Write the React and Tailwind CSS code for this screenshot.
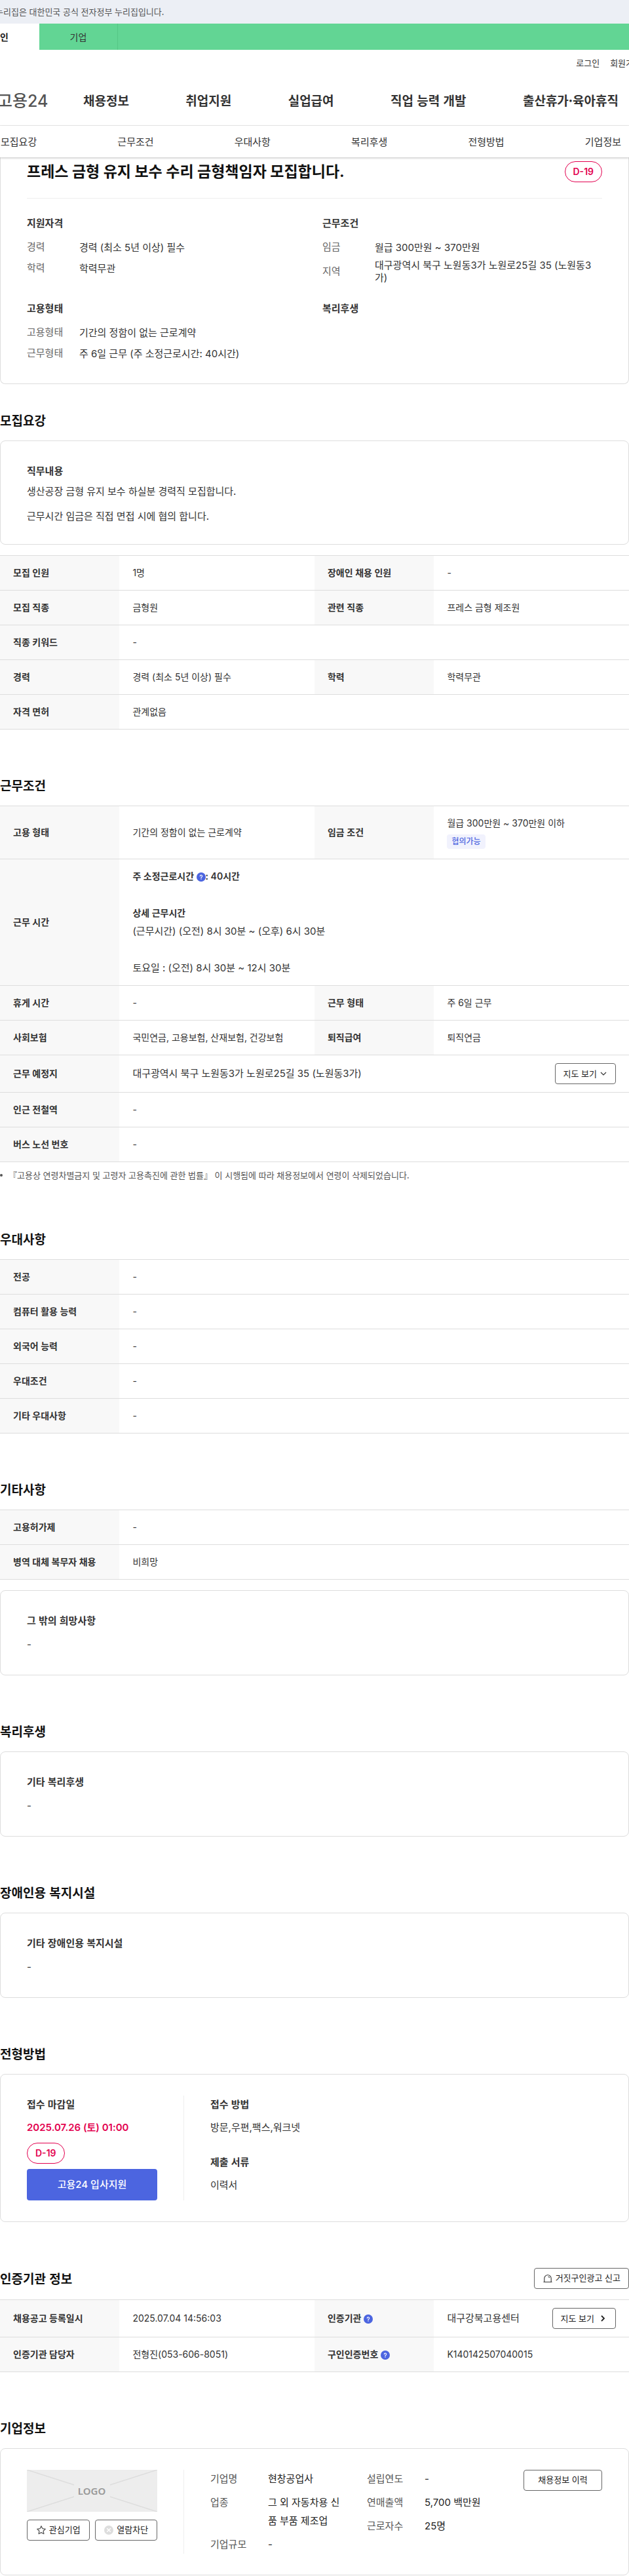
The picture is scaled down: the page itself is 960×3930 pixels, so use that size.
import React from 'react';

const headerMenus = ['채용정보', '취업지원', '실업급여', '직업 능력 개발', '출산휴가·육아휴직'];
const sectionTabs = ['모집요강', '근무조건', '우대사항', '복리후생', '전형방법', '기업정보'];

function DDay() {
  return (
    <span className="inline-flex h-8 items-center rounded-full border border-[#e3004f] px-[12px] text-sm font-semibold text-[#e3004f]">
      D-19
    </span>
  );
}

function HelpButton() {
  return (
    <button type="button" aria-label="도움말" className="inline-block align-middle cursor-pointer">
      <svg className="w-[14px] h-[14px] block" viewBox="0 0 14 14" fill="none">
        <circle cx="7" cy="7" r="7" fill="#4c65e0" />
        <path d="M5.4 5.7a1.6 1.6 0 1 1 2.5 1.3c-.6.4-.9.6-.9 1.2" stroke="#fff" strokeWidth="1.2" strokeLinecap="round" />
        <circle cx="7" cy="10.1" r="0.75" fill="#fff" />
      </svg>
    </button>
  );
}

function OutlineButton({ children, className = 'px-3' }) {
  return (
    <button
      type="button"
      className={`inline-flex h-8 shrink-0 items-center justify-center gap-1 whitespace-nowrap rounded border border-[#666] bg-white text-[13px] text-[#222] cursor-pointer ${className}`}
    >
      {children}
    </button>
  );
}

function Section({ title, action, first, children }) {
  return (
    <section className={first ? 'mt-10' : 'mt-[70px]'}>
      <div className="mb-4 flex items-center justify-between">
        <h2 className="font-['Noto_Sans_CJK_KR',Inter,sans-serif] text-[19px] leading-[30px] font-bold text-[#111]">{title}</h2>
        {action}
      </div>
      {children}
    </section>
  );
}

function Card({ children }) {
  return <div className="rounded-lg border border-[#ddd] px-10 py-8">{children}</div>;
}

function CardTitle({ children }) {
  return (
    <h3 className="font-['Noto_Sans_CJK_KR',Inter,sans-serif] text-[15px] leading-[26px] font-bold text-[#333]">{children}</h3>
  );
}

// each row is a list of [label, value] pairs; a single pair spans the whole row
function InfoTable({ caption, rows }) {
  return (
    <table className="w-full table-fixed border-collapse border-t border-[#ddd] text-sm">
      <caption className="sr-only">{caption}</caption>
      <colgroup>
        <col className="w-[19%]" />
        <col className="w-[31%]" />
        <col className="w-[19%]" />
        <col className="w-[31%]" />
      </colgroup>
      <tbody>
        {rows.map((row, i) => (
          <tr key={i} className="border-b border-[#ddd]">
            {row.map(([label, value], j) => (
              <React.Fragment key={j}>
                <th scope="row" className="bg-[#f8f8f8] px-5 py-3 text-left leading-7 font-semibold text-[#333]">
                  {label}
                </th>
                <td colSpan={row.length === 1 ? 3 : 1} className="px-5 py-3 leading-7 text-[#333]">
                  {value}
                </td>
              </React.Fragment>
            ))}
          </tr>
        ))}
      </tbody>
    </table>
  );
}

function Summary({ title, items }) {
  return (
    <div>
      <div className="mb-[10px]">
        <CardTitle>{title}</CardTitle>
      </div>
      <dl className="flex flex-col gap-1 text-[15px]">
        {items.map(([label, value]) => (
          <div key={label} className="flex min-h-7 items-center">
            <dt className="w-20 shrink-0 text-[#666]">{label}</dt>
            <dd className="break-all leading-[19px] text-[#333]">{value}</dd>
          </div>
        ))}
      </dl>
    </div>
  );
}

function NoteSection({ title, label }) {
  return (
    <Section title={title}>
      <Card>
        <CardTitle>{label}</CardTitle>
        <p className="mt-[10px] text-[15px] leading-7 text-[#333]">-</p>
      </Card>
    </Section>
  );
}

function CompanyList({ items }) {
  return (
    <dl className="flex flex-1 flex-col gap-2 text-[15px] leading-7">
      {items.map(([label, value]) => (
        <div key={label} className="flex pr-8">
          <dt className="w-[88px] shrink-0 text-[#555]">{label}</dt>
          <dd className="break-all text-[#222]">{value}</dd>
        </div>
      ))}
    </dl>
  );
}

function Header() {
  return (
    <header className="font-['Noto_Sans_CJK_KR',Inter,sans-serif]">
      <div className="bg-[#eceff5]">
        <p className="-ml-[7px] text-[13px] leading-9 text-[#555] whitespace-nowrap">
          누리집은 대한민국 공식 전자정부 누리집입니다.
        </p>
      </div>
      <div className="bg-[#62d594]">
        <div className="-ml-[60px] flex h-10 text-sm">
          <a href="#" className="flex w-[120px] items-center justify-center bg-white font-semibold text-[#222]">개인</a>
          <a href="#" className="flex w-[120px] items-center justify-center border-r border-[#55c685] text-[#333]">기업</a>
        </div>
      </div>
      <div className="-mr-[19px] flex h-10 items-center justify-end gap-4 text-[13px] text-[#333] whitespace-nowrap">
        <a href="#">로그인</a>
        <a href="#">회원가입</a>
      </div>
      <div className="flex h-[76px] items-center border-b border-[#eee]">
        <a href="#" className="-ml-1 w-[131px] shrink-0 font-[Inter,'Noto_Sans_CJK_KR',sans-serif] text-[25px] leading-8 font-medium text-[#555]">
          고용24
        </a>
        <nav className="flex flex-1 justify-between pr-4 text-[19px] font-bold text-[#333] whitespace-nowrap">
          {headerMenus.map((menu) => (
            <a key={menu} href="#">{menu}</a>
          ))}
        </nav>
      </div>
      <nav className="relative flex h-12 items-center justify-between bg-white pr-3 pl-px text-[15px] text-[#333] shadow-[0_1px_3px_rgba(0,0,0,0.25)]">
        {sectionTabs.map((tab) => (
          <a key={tab} href="#">{tab}</a>
        ))}
      </nav>
    </header>
  );
}

export default function App() {
  return (
    <div className="overflow-hidden bg-white font-[Inter,'Noto_Sans_CJK_KR',sans-serif] text-[#333]" lang="ko">
      <Header />

      <main>
        <div className="rounded-b-lg border-x border-b border-[#ddd] px-10 pt-[6px] pb-8">
          <div className="flex items-center justify-between border-b border-[#eee] pb-6">
            <h1 className="text-[23px] leading-8 font-bold text-[#111]">
              프레스 금형 유지 보수 수리 금형책임자 모집합니다.
            </h1>
            <DDay />
          </div>
          <div className="mt-6 grid grid-cols-2 gap-6">
            <Summary title="지원자격" items={[['경력', '경력 (최소 5년 이상) 필수'], ['학력', '학력무관']]} />
            <Summary
              title="근무조건"
              items={[
                ['임금', '월급 300만원 ~ 370만원'],
                ['지역', '대구광역시 북구 노원동3가 노원로25길 35 (노원동3가)'],
              ]}
            />
            <Summary
              title="고용형태"
              items={[
                ['고용형태', '기간의 정함이 없는 근로계약'],
                ['근무형태', '주 6일 근무 (주 소정근로시간: 40시간)'],
              ]}
            />
            <Summary title="복리후생" items={[]} />
          </div>
        </div>

        <Section title="모집요강" first>
          <Card>
            <CardTitle>직무내용</CardTitle>
            <p className="mt-[9px] text-[15px] leading-5">생산공장 금형 유지 보수 하실분 경력직 모집합니다.</p>
            <p className="mt-[18px] text-[15px] leading-5">근무시간 임금은 직접 면접 시에 협의 합니다.</p>
          </Card>
          <div className="mt-4">
            <InfoTable
              caption="모집요강"
              rows={[
                [['모집 인원', '1명'], ['장애인 채용 인원', '-']],
                [['모집 직종', '금형원'], ['관련 직종', '프레스 금형 제조원']],
                [['직종 키워드', '-']],
                [['경력', '경력 (최소 5년 이상) 필수'], ['학력', '학력무관']],
                [['자격 면허', '관계없음']],
              ]}
            />
          </div>
        </Section>

        <Section title="근무조건">
          <InfoTable
            caption="근무조건"
            rows={[
              [
                ['고용 형태', '기간의 정함이 없는 근로계약'],
                [
                  '임금 조건',
                  <>
                    <p>월급 300만원 ~ 370만원 이하</p>
                    <div className="flex h-7 items-center">
                      <span className="rounded bg-[#f1f2fd] px-[7px] text-xs leading-[22px] font-medium text-[#4c65e0]">협의가능</span>
                    </div>
                  </>,
                ],
              ],
              [
                [
                  '근무 시간',
                  <>
                    <p className="font-semibold">
                      주 소정근로시간 <HelpButton />: 40시간
                    </p>
                    <p className="mt-7 font-semibold">상세 근무시간</p>
                    <p className="text-[15px] leading-7">(근무시간) (오전) 8시 30분 ~ (오후) 6시 30분</p>
                    <p className="mt-7 text-[15px] leading-7">토요일 : (오전) 8시 30분 ~ 12시 30분</p>
                  </>,
                ],
              ],
              [['휴게 시간', '-'], ['근무 형태', '주 6일 근무']],
              [['사회보험', '국민연금, 고용보험, 산재보험, 건강보험'], ['퇴직급여', '퇴직연금']],
              [
                [
                  '근무 예정지',
                  <div className="flex items-center justify-between">
                    <span className="text-[15px]">대구광역시 북구 노원동3가 노원로25길 35 (노원동3가)</span>
                    <OutlineButton>
                      지도 보기
                      <svg className="w-3 h-3" viewBox="0 0 12 12" fill="none" stroke="#333" strokeWidth="1.2">
                        <path d="M2 4l4 4 4-4" />
                      </svg>
                    </OutlineButton>
                  </div>,
                ],
              ],
              [['인근 전철역', '-']],
              [['버스 노선 번호', '-']],
            ]}
          />
          <p className="flex items-center gap-[9px] pt-2 font-['Noto_Sans_CJK_KR',Inter,sans-serif] text-[13px] leading-6 text-[#555]">
            <span className="h-1 w-1 rounded-full bg-[#555]"></span>
            『고용상 연령차별금지 및 고령자 고용촉진에 관한 법률』 이 시행됨에 따라 채용정보에서 연령이 삭제되었습니다.
          </p>
        </Section>

        <Section title="우대사항">
          <InfoTable
            caption="우대사항"
            rows={[
              [['전공', '-']],
              [['컴퓨터 활용 능력', '-']],
              [['외국어 능력', '-']],
              [['우대조건', '-']],
              [['기타 우대사항', '-']],
            ]}
          />
        </Section>

        <Section title="기타사항">
          <InfoTable caption="기타사항" rows={[[['고용허가제', '-']], [['병역 대체 복무자 채용', '비희망']]]} />
          <div className="mt-4">
            <Card>
              <CardTitle>그 밖의 희망사항</CardTitle>
              <p className="mt-[10px] text-[15px] leading-7">-</p>
            </Card>
          </div>
        </Section>

        <NoteSection title="복리후생" label="기타 복리후생" />
        <NoteSection title="장애인용 복지시설" label="기타 장애인용 복지시설" />

        <Section title="전형방법">
          <Card>
            <div className="flex">
              <div className="flex w-60 shrink-0 flex-col items-start border-r border-[#eee] pr-10">
                <CardTitle>접수 마감일</CardTitle>
                <p className="mt-[10px] text-[15px] leading-[26px] font-semibold text-[#e3004f]">2025.07.26 (토) 01:00</p>
                <div className="mt-[10px] mb-2 flex">
                  <DDay />
                </div>
                <button type="button" className="h-12 w-full cursor-pointer rounded bg-[#4c65e0] text-[15px] font-medium text-white">
                  고용24 입사지원
                </button>
              </div>
              <div className="pl-10 text-[15px]">
                <CardTitle>접수 방법</CardTitle>
                <p className="mt-[10px] leading-[26px]">방문,우편,팩스,워크넷</p>
                <div className="mt-[26px]">
                  <CardTitle>제출 서류</CardTitle>
                </div>
                <p className="mt-[10px] leading-[26px]">이력서</p>
              </div>
            </div>
          </Card>
        </Section>

        <Section
          title="인증기관 정보"
          action={
            <OutlineButton>
              <svg className="w-4 h-4" viewBox="0 0 16 16" fill="none" stroke="#333" strokeWidth="1.1">
                <path d="M2.8 13.4V8a5.2 5.2 0 0 1 10.4 0v5.4M1.5 13.5h13" />
                <path d="M8.6 5.2a2.4 2.4 0 0 1 2 2" />
              </svg>
              거짓구인광고 신고
            </OutlineButton>
          }
        >
          <InfoTable
            caption="인증기관 정보"
            rows={[
              [
                ['채용공고 등록일시', '2025.07.04 14:56:03'],
                [
                  <>인증기관 <HelpButton /></>,
                  <div className="flex items-center justify-between">
                    <span className="text-[15px]">대구강북고용센터</span>
                    <OutlineButton>
                      지도 보기
                      <svg className="w-4 h-4" viewBox="0 0 16 16" fill="none" stroke="#222" strokeWidth="1.8">
                        <path d="M7 4l4 4-4 4" />
                      </svg>
                    </OutlineButton>
                  </div>,
                ],
              ],
              [
                ['인증기관 담당자', '전형진(053-606-8051)'],
                [<>구인인증번호 <HelpButton /></>, 'K140142507040015'],
              ],
            ]}
          />
        </Section>

        <Section title="기업정보">
          <Card>
            <div className="flex">
              <div className="w-60 shrink-0 border-r border-[#eee] pr-10">
                <svg className="block h-16 w-full" viewBox="0 0 199 64" role="img" aria-label="LOGO">
                  <rect width="199" height="64" fill="#ededed" />
                  <path d="M0 0l72 23M199 0l-72 23M0 64l72-23M199 64l-72-23" stroke="#ddd" strokeWidth="1.5" />
                  <text x="99" y="38" textAnchor="middle" fontSize="15" fontWeight="600" fill="#999" className="font-['Noto_Sans']">
                    LOGO
                  </text>
                </svg>
                <div className="mt-3 grid grid-cols-2 gap-2">
                  <OutlineButton className="px-1">
                    <svg className="w-4 h-4" viewBox="0 0 16 16" fill="none" stroke="#555" strokeWidth="1.2" strokeLinejoin="round">
                      <path d="M8 1.7l1.9 4 4.4.6-3.2 3 .8 4.4L8 11.6l-3.9 2.1.8-4.4-3.2-3 4.4-.6z" />
                    </svg>
                    관심기업
                  </OutlineButton>
                  <OutlineButton className="px-1">
                    <svg className="w-4 h-4" viewBox="0 0 16 16" fill="none">
                      <circle cx="8" cy="8" r="7" fill="#ddd" />
                      <path d="M5.2 5.2l5.6 5.6M10.8 5.2l-5.6 5.6" stroke="#fff" strokeWidth="1.3" />
                    </svg>
                    열람차단
                  </OutlineButton>
                </div>
              </div>
              <div className="flex flex-1 items-start pl-10">
                <CompanyList items={[['기업명', '현창공업사'], ['업종', '그 외 자동차용 신품 부품 제조업'], ['기업규모', '-']]} />
                <CompanyList items={[['설립연도', '-'], ['연매출액', '5,700 백만원'], ['근로자수', '25명']]} />
                <OutlineButton className="w-[120px]">채용정보 이력</OutlineButton>
              </div>
            </div>
          </Card>
        </Section>
      </main>
    </div>
  );
}
